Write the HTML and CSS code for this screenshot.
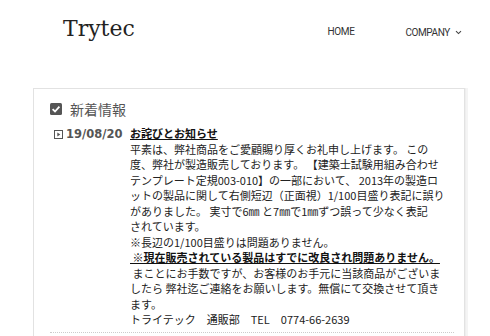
FILE: index.html
```html
<!DOCTYPE html>
<html lang="ja">
<head>
<meta charset="utf-8">
<title>Trytec</title>
<link rel="stylesheet" href="styles.css">
</head>
<body>
<header class="site-header">
  <div class="logo">Trytec</div>
  <nav class="gnav">
    <a class="gnav-item" href="#">HOME</a>
    <a class="gnav-item" href="#">COMPANY <span class="chev"><svg width="7" height="5" viewBox="0 0 7 5"><path d="M1 1.2 L3.5 3.6 L6 1.2" fill="none" stroke="#444" stroke-width="1.1"/></svg></span></a>
  </nav>
</header>
<main class="main">
  <section class="news">
    <h2 class="news-title">
      <svg class="check" width="12" height="12" viewBox="0 0 12 12"><rect x="0" y="0" width="12" height="12" rx="1.5" fill="#555"/><path d="M2.6 6.2 L5 8.5 L9.4 3.6" fill="none" stroke="#fff" stroke-width="1.8"/></svg>
      新着情報
    </h2>
    <div class="item">
      <div class="date">
        <svg class="play" width="9" height="9" viewBox="0 0 9 9"><rect x="0.5" y="0.5" width="8" height="8" fill="none" stroke="#555" stroke-width="1"/><path d="M3.3 2.4 L6.3 4.5 L3.3 6.6 Z" fill="#555"/></svg>
        <span>19/08/20</span>
      </div>
      <div class="entry">
        <a class="entry-title" href="#">お詫びとお知らせ</a>
        <p class="entry-body">平素は、弊社商品をご愛顧賜り厚くお礼申し上げます。 この<br>度、弊社が製造販売しております。 【建築士試験用組み合わせ<br>テンプレート定規003-010】の一部において、 2013年の製造ロ<br>ットの製品に関して右側短辺（正面視）1/100目盛り表記に誤り<br>がありました。 実寸で6㎜ と7㎜で1㎜ずつ誤って少なく表記<br>されています。<br>※長辺の1/100目盛りは問題ありません。<br><strong class="notice">&nbsp;※現在販売されている製品はすでに改良され問題ありません。</strong><br>&nbsp;まことにお手数ですが、お客様のお手元に当該商品がございま<br>したら 弊社迄ご連絡をお願いします。無償にて交換させて頂き<br>ます。<br>トライテック　通販部　TEL　0774-66-2639</p>
      </div>
    </div>
    <div class="sep"></div>
  </section>
</main>
</body>
</html>
```

FILE: styles.css
```css
html, body {
  margin: 0;
  padding: 0;
  background: #fff;
}
body {
  font-family: "Noto Sans CJK JP", "Noto Sans", sans-serif;
  color: #333;
  width: 490px;
  overflow: hidden;
}
.site-header {
  display: flex;
  align-items: flex-start;
  height: 88px;
}
.logo {
  font-family: "DejaVu Serif", serif;
  font-size: 22px;
  color: #222;
  margin: 16px 0 0 63px;
  line-height: 26px;
}
.gnav {
  display: flex;
  margin: 25px 28px 0 auto;
  gap: 51px;
}
.gnav-item {
  font-family: Roboto, "Noto Sans", sans-serif;
  font-size: 10px;
  letter-spacing: -0.4px;
  color: #333;
  text-decoration: none;
  line-height: 14px;
}
.chev {
  display: inline-block;
  margin-left: 3px;
  vertical-align: 1px;
}
.main {
  padding-left: 33px;
}
.news {
  width: 432px;
  border: 1px solid #e2e2e2;
  box-shadow: 1px 0 0 #eee, 3px 0 0 #f4f4f4;
  padding: 9px 0 20px 16px;
  box-sizing: border-box;
}
.news-title {
  margin: 0;
  display: flex;
  align-items: center;
  gap: 8px;
  font-size: 14px;
  font-weight: normal;
  color: #555;
  line-height: 22px;
}
.check { flex: none; }
.item {
  display: flex;
  margin-top: 6px;
}
.date {
  display: flex;
  align-items: center;
  gap: 3px;
  width: 76px;
  margin-left: 4px;
  font-family: "DejaVu Sans", sans-serif;
  font-size: 11.5px;
  font-weight: bold;
  color: #555;
  height: 16px;
  align-self: flex-start;
}
.entry {
  width: 330px;
  font-size: 11px;
  line-height: 15.5px;
}
.entry-title {
  color: #111;
  font-weight: bold;
  text-decoration: underline;
}
.entry-body {
  margin: 0;
  color: #222;
}
.notice {
  text-decoration: underline;
  color: #111;
}
.sep {
  margin: 4px 0 0 0;
  border-top: 1px dotted #ccc;
  width: 404px;
}
```
